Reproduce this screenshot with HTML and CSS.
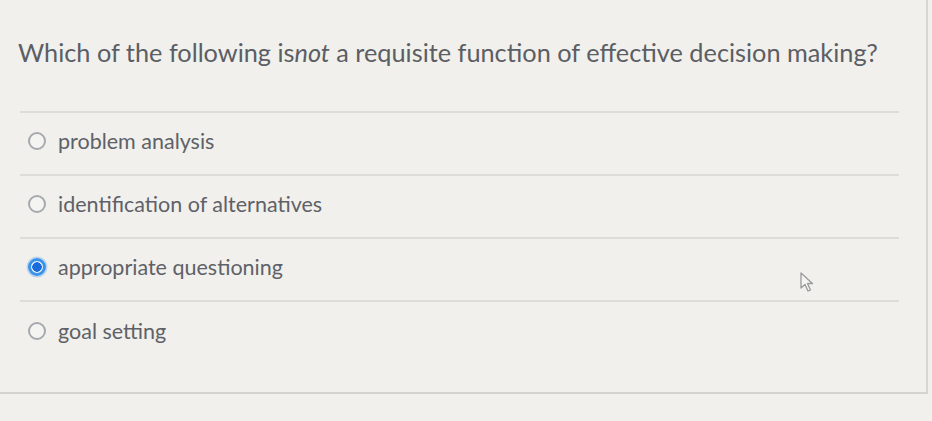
FILE: index.html
```html
<!DOCTYPE html>
<html>
<head>
<meta charset="utf-8">
<link rel="stylesheet" href="styles.css">
</head>
<body>
<div class="quiz">
  <div class="question"><span class="question-text">Which of the following is<em>not</em> a requisite function of effective decision making?</span></div>
  <div class="answers">
    <label class="answer"><span class="radio"></span><span class="label">problem analysis</span></label>
    <label class="answer"><span class="radio"></span><span class="label">identification of alternatives</span></label>
    <label class="answer"><span class="radio checked"></span><span class="label">appropriate questioning</span></label>
    <label class="answer last"><span class="radio"></span><span class="label">goal setting</span></label>
  </div>
</div>
<div class="cursor">
  <svg width="16" height="22" viewBox="0 0 16 22"><path d="M2 2 L2 17 L6 13.5 L9 20 L11.5 19 L8.5 12.5 L13.5 12.5 Z" fill="#f4f4f2" stroke="#9a9a9a" stroke-width="1.3" stroke-linejoin="round"/></svg>
</div>
</body>
</html>
```
FILE: styles.css
```css
html, body {
  margin: 0;
  padding: 0;
  background: #f1f0ec;
  width: 932px;
  height: 421px;
  overflow: hidden;
  font-family: Lato, "Open Sans", sans-serif;
  color: #5b5e64;
}
.quiz {
  width: 928px;
  height: 394px;
  border-right: 2px solid #d6d6d3;
  border-bottom: 2px solid #d3d3d0;
  box-sizing: border-box;
  position: relative;
}
.question {
  padding-top: 37px;
  height: 113px;
  box-sizing: border-box;
  font-size: 25.3px;
  line-height: 30px;
  border-bottom: 2px solid #dddcd9;
  margin: 0 27px 0 20px;
}
.question-text {
  display: block;
  margin-left: -2px;
}
.question em {
  font-style: italic;
}
.answers {
  margin-left: 20px;
  margin-right: 27px;
}
.answer {
  display: flex;
  align-items: center;
  height: 63px;
  border-bottom: 2px solid #dddcd9;
  box-sizing: border-box;
  padding-left: 8px;
  padding-bottom: 6px;
}
.answer.last {
  border-bottom: none;
}
.radio {
  width: 18px;
  height: 18px;
  border: 2px solid #a6a9ad;
  border-radius: 50%;
  box-sizing: border-box;
  flex: none;
  margin-right: 12px;
  background: #f4f4f2;
}
.radio.checked {
  border: 3px solid #3a93ea;
  background: radial-gradient(circle, #1a6cdc 0 4.5px, #eef3f8 5px);
  box-shadow: 0 0 0 1.5px #bcd4ee;
}
.label {
  font-size: 21.5px;
  color: #5e6167;
}
.cursor {
  position: absolute;
  left: 799px;
  top: 271px;
}
```
